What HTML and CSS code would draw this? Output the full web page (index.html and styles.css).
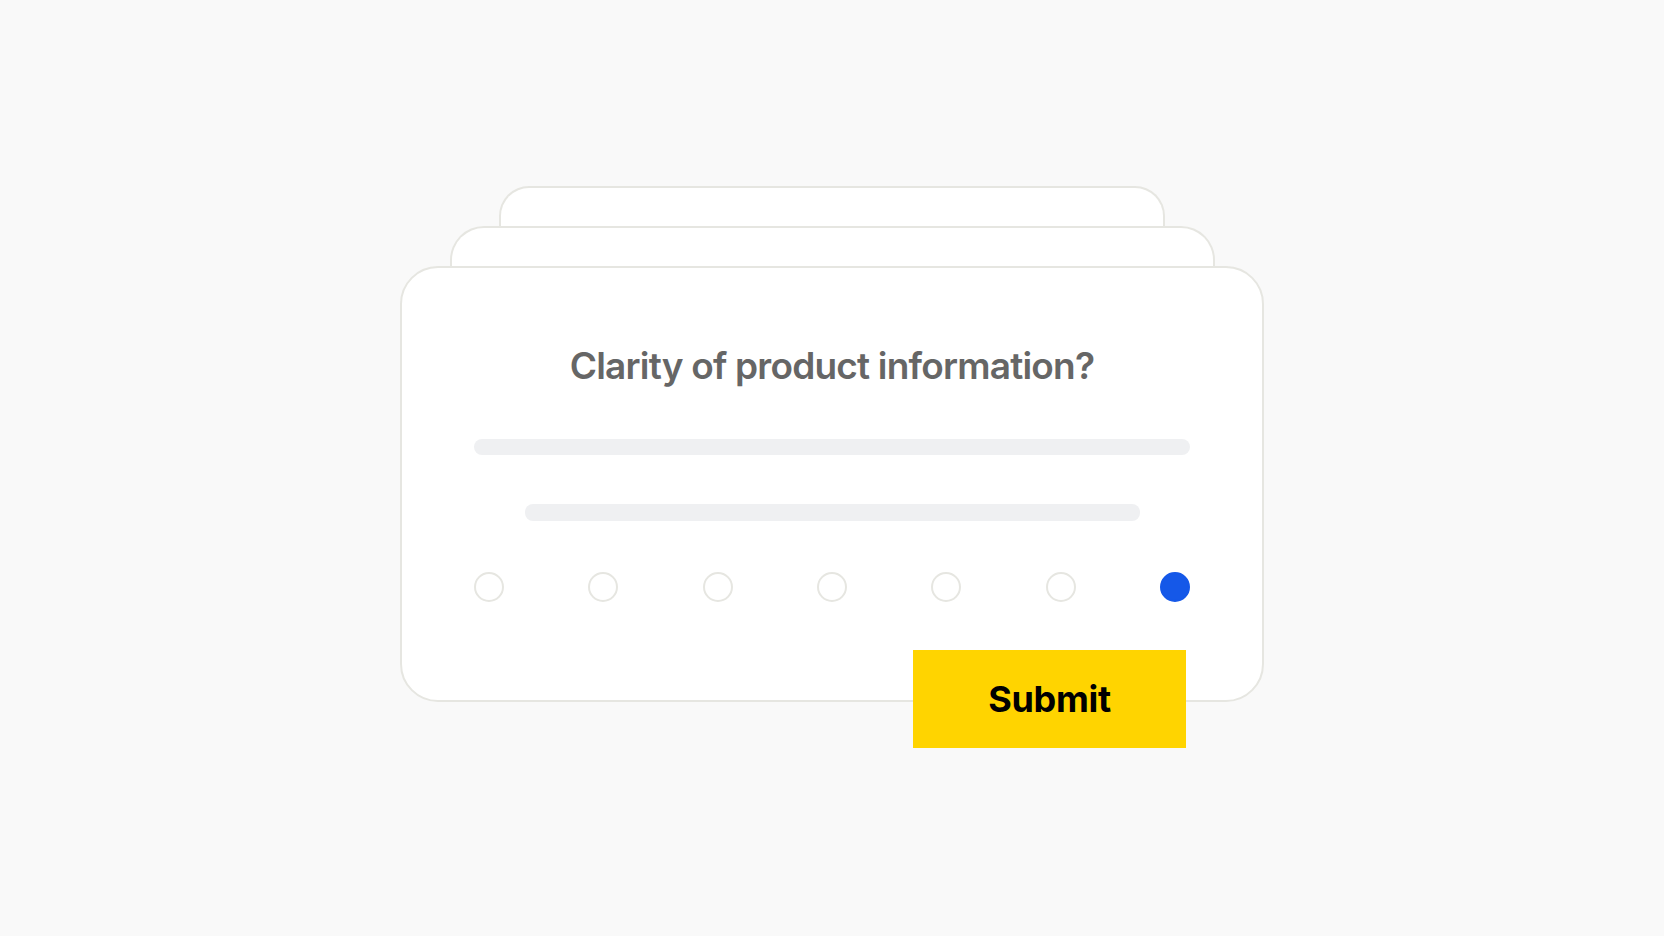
FILE: index.html
```html
<!DOCTYPE html>
<html>
<head>
<meta charset="utf-8">
<link rel="stylesheet" href="styles.css">
</head>
<body>
<div class="stage">
  <div class="sheet sheet-back"></div>
  <div class="sheet sheet-mid"></div>
  <div class="card">
    <h1 class="title">Clarity of product information?</h1>
    <div class="bar bar-long"></div>
    <div class="bar bar-short"></div>
    <div class="scale">
      <span class="dot"></span>
      <span class="dot"></span>
      <span class="dot"></span>
      <span class="dot"></span>
      <span class="dot"></span>
      <span class="dot"></span>
      <span class="dot dot-on"></span>
    </div>
    <div class="footer">
      <button class="submit">Submit</button>
    </div>
  </div>
</div>
</body>
</html>
```
FILE: styles.css
```css
html, body {
  margin: 0;
  padding: 0;
}
body {
  background: #f9f9f9;
  width: 1664px;
  height: 936px;
  overflow: hidden;
  font-family: Inter, "Liberation Sans", sans-serif;
}
.stage {
  display: flex;
  flex-direction: column;
  align-items: center;
  padding-top: 186px;
}
.sheet {
  box-sizing: border-box;
  flex-shrink: 0;
  background: #fff;
  border: 2px solid #e6e6e1;
  border-bottom: none;
  height: 80px;
  margin-bottom: -40px;
}
.sheet-back {
  width: 666px;
  border-radius: 30px 30px 0 0;
}
.sheet-mid {
  width: 765px;
  border-radius: 34px 34px 0 0;
}
.card {
  box-sizing: border-box;
  flex-shrink: 0;
  width: 864px;
  height: 436px;
  background: #fff;
  border: 2px solid #e6e6e1;
  border-radius: 38px;
  padding: 76px 73px 0;
  display: flex;
  flex-direction: column;
  align-items: center;
}
.card > * {
  flex-shrink: 0;
}
.title {
  margin: 0;
  font-size: 37px;
  line-height: 44px;
  font-weight: 600;
  color: #666666;
  letter-spacing: -0.8px;
  text-align: center;
}
.bar {
  height: 16px;
  border-radius: 8px;
  background: #eff0f2;
}
.bar-long {
  width: 716px;
  margin-top: 51px;
}
.bar-short {
  width: 615px;
  height: 17px;
  margin-top: 49px;
}
.scale {
  width: 716px;
  margin-top: 51px;
  display: flex;
  justify-content: space-between;
}
.dot {
  box-sizing: border-box;
  width: 30px;
  height: 30px;
  border-radius: 50%;
  border: 2px solid #e6e6e1;
  background: #fff;
}
.dot-on {
  background: #1558e8;
  border-color: #1558e8;
}
.footer {
  width: 716px;
  display: flex;
  justify-content: flex-end;
  margin-top: 48px;
}
.submit {
  width: 273px;
  height: 98px;
  margin-right: 4px;
  border: none;
  border-radius: 0;
  background: #ffd400;
  color: #000;
  font-family: Inter, "Liberation Sans", sans-serif;
  font-size: 36px;
  font-weight: 700;
  letter-spacing: -0.3px;
  padding: 0;
}
```
